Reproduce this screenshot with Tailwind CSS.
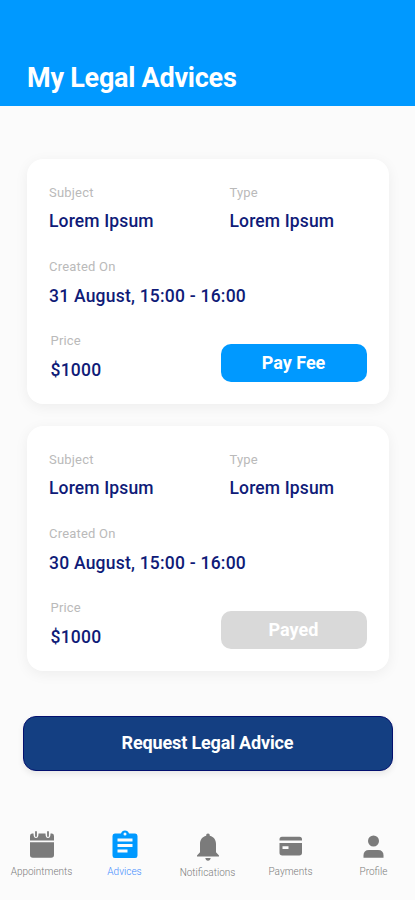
<!DOCTYPE html>
<html lang="en">
<head>
<meta charset="utf-8">
<title>My Legal Advices</title>
<script src="https://cdn.jsdelivr.net/npm/@tailwindcss/browser@4"></script>
</head>
<body class="w-[415px] h-[900px] overflow-hidden bg-[#fbfbfb] font-['Roboto',sans-serif] flex flex-col">
<header class="h-[105.5px] shrink-0 bg-[#0099ff] pl-[27px] pt-[62px]">
  <h1 class="text-[27px] leading-8 tracking-[-0.25px] font-bold text-white whitespace-nowrap">My Legal Advices</h1>
</header>
<main class="pt-[53.5px] flex flex-col shrink-0">
  <div class="mx-[26.5px] w-[362px] flex flex-col gap-[22px]">
    <article class="h-[245px] rounded-[16px] bg-white shadow-[0_3px_14px_rgba(0,0,0,0.06)] pl-[22.5px] pt-[24px]">
      <div class="flex h-[74px]">
        <div class="w-[180.5px]"><p class="text-[13px] leading-5 tracking-[0.2px] text-[#bababa]">Subject</p><p class="mt-[6px] text-[17.5px] leading-6 tracking-[0.14px] font-medium text-[#0f1b78]">Lorem Ipsum</p></div>
        <div><p class="text-[13px] leading-5 tracking-[0.2px] text-[#bababa]">Type</p><p class="mt-[6px] text-[17.5px] leading-6 tracking-[0.14px] font-medium text-[#0f1b78]">Lorem Ipsum</p></div>
      </div>
      <div class="h-[74px]"><p class="text-[13px] leading-5 tracking-[0.2px] text-[#bababa]">Created On</p><p class="mt-[7px] text-[17.5px] leading-6 tracking-[0.22px] font-medium text-[#0f1b78]">31 August, 15:00 - 16:00</p></div>
      <div class="flex">
        <div class="w-[171.5px] pl-[1.5px]"><p class="text-[13px] leading-5 tracking-[0.2px] text-[#bababa]">Price</p><p class="mt-[7px] text-[17.5px] leading-6 tracking-[0.22px] font-medium text-[#0f1b78]">$1000</p></div>
        <button class="mt-[13px] h-[37.5px] w-[146px] rounded-[10px] bg-[#0099ff] text-[18px] leading-6 font-bold text-white">Pay Fee</button>
      </div>
    </article>
    <article class="h-[245px] rounded-[16px] bg-white shadow-[0_3px_14px_rgba(0,0,0,0.06)] pl-[22.5px] pt-[24px]">
      <div class="flex h-[74px]">
        <div class="w-[180.5px]"><p class="text-[13px] leading-5 tracking-[0.2px] text-[#bababa]">Subject</p><p class="mt-[6px] text-[17.5px] leading-6 tracking-[0.14px] font-medium text-[#0f1b78]">Lorem Ipsum</p></div>
        <div><p class="text-[13px] leading-5 tracking-[0.2px] text-[#bababa]">Type</p><p class="mt-[6px] text-[17.5px] leading-6 tracking-[0.14px] font-medium text-[#0f1b78]">Lorem Ipsum</p></div>
      </div>
      <div class="h-[74px]"><p class="text-[13px] leading-5 tracking-[0.2px] text-[#bababa]">Created On</p><p class="mt-[7px] text-[17.5px] leading-6 tracking-[0.22px] font-medium text-[#0f1b78]">30 August, 15:00 - 16:00</p></div>
      <div class="flex">
        <div class="w-[171.5px] pl-[1.5px]"><p class="text-[13px] leading-5 tracking-[0.2px] text-[#bababa]">Price</p><p class="mt-[7px] text-[17.5px] leading-6 tracking-[0.22px] font-medium text-[#0f1b78]">$1000</p></div>
        <button class="mt-[13px] h-[38px] w-[146px] rounded-[10px] bg-[#d9d9d9] pb-[1px] text-[18px] leading-6 font-bold text-white">Payed</button>
      </div>
    </article>
  </div>
  <button class="mt-[44.5px] ml-[22.5px] h-[55px] w-[370px] rounded-[13px] border border-[#03106f] bg-[#143f82] pb-[2px] text-[18px] tracking-[-0.15px] font-bold text-white shadow-[0_3px_6px_rgba(0,0,0,0.08)]">Request Legal Advice</button>
</main>
<nav class="mt-[58px] grid grid-cols-5 text-[#7b7b7b] text-[10px] leading-3">
  <a class="flex flex-col items-center pt-[1px]">
    <svg class="h-[30px] w-[26px]" viewBox="0 0 26 30" fill="currentColor"><path d="M1 10.500V6q0-2.500 2-2.500h1.500q0 4.500 2.500 4.500t2.500-4.500h7q0 4.500 2.500 4.500t2.500-4.500H23Q25 3.500 25 6v4.500zM1 12.300h24V25q0 2.800-2.800 2.800H3.800Q1 27.800 1 25z"/><path d="M7 2V6M19 2V6" fill="none" stroke="currentColor" stroke-width="1.800" stroke-linecap="round"/></svg>
    <span class="mt-[6px] font-light">Appointments</span>
  </a>
  <a class="flex flex-col items-center pt-[1px] text-[#0099ff]">
    <svg class="h-[30px] w-[26px]" viewBox="0 0 26 30" fill="currentColor"><path fill-rule="evenodd" d="M2.800 3.500H9a4.200 4.200 0 0 1 8 0h6.200Q25.500 3.500 25.500 6v19.500q0 2.500-2.300 2.500H2.800Q.5 28 .5 25.500V6Q.5 3.500 2.800 3.500zM13 2.400a1.500 1.500 0 1 0 0 3a1.500 1.500 0 0 0 0-3zM5.500 8.500v3h15v-3zM5.500 14v3h15v-3zM5.500 19.500v3h10v-3z"/></svg>
    <span class="mt-[6px] font-light text-[#3f8cff]">Advices</span>
  </a>
  <a class="flex flex-col items-center pt-[2px]">
    <svg class="h-[30px] w-[26px]" viewBox="0 0 26 30" fill="currentColor"><path d="M13 2.500c1.300 0 1.800.9 1.800 2.200 4.200 1 6.200 4.300 6.200 8.300v8.300l3 3.200v1H2v-1l3-3.200V13c0-4 2-7.300 6.200-8.300 0-1.300.5-2.200 1.800-2.200zM10.300 27h5.400c-.2 1.600-1.200 2.700-2.700 2.700s-2.500-1.100-2.700-2.700z"/></svg>
    <span class="mt-[6px] font-light">Notifications</span>
  </a>
  <a class="flex flex-col items-center pt-[1px]">
    <svg class="h-[30px] w-[26px]" viewBox="0 0 26 30" fill="currentColor"><path fill-rule="evenodd" d="M1.500 10.500V9.200q0-2.500 2.500-2.500h17.500Q24 6.700 24 9.200v1.300zM1.500 13H24v9.800q0 2.700-2.700 2.700H4.200q-2.700 0-2.700-2.700zM4.500 16.200v2.700h6v-2.700z"/></svg>
    <span class="mt-[6px] font-light">Payments</span>
  </a>
  <a class="flex flex-col items-center pt-[1px]">
    <svg class="h-[30px] w-[26px]" viewBox="0 0 26 30" fill="currentColor"><circle cx="12.500" cy="11" r="5.500"/><path d="M2.500 27.800V25.500q0-5.500 5.500-5.500h9q5.500 0 5.500 5.500v2.300z"/></svg>
    <span class="mt-[6px] font-light">Profile</span>
  </a>
</nav>
</body>
</html>
